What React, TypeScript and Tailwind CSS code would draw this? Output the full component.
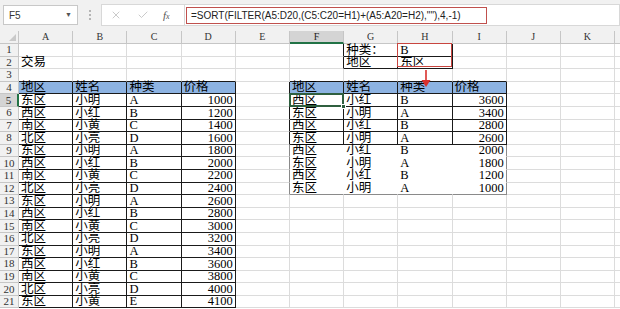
import { X, Check } from "lucide-react";

const COLS = ["A", "B", "C", "D", "E", "F", "G", "H", "I", "J", "K", ""];

type Cell = { v: string; num?: boolean };

const leftRows: [string, string, string, number][] = [
  ["东区", "小明", "A", 1000],
  ["西区", "小红", "B", 1200],
  ["南区", "小黄", "C", 1400],
  ["北区", "小亮", "D", 1600],
  ["东区", "小明", "A", 1800],
  ["西区", "小红", "B", 2000],
  ["南区", "小黄", "C", 2200],
  ["北区", "小亮", "D", 2400],
  ["东区", "小明", "A", 2600],
  ["西区", "小红", "B", 2800],
  ["南区", "小黄", "C", 3000],
  ["北区", "小亮", "D", 3200],
  ["东区", "小明", "A", 3400],
  ["西区", "小红", "B", 3600],
  ["南区", "小黄", "C", 3800],
  ["北区", "小亮", "D", 4000],
  ["东区", "小黄", "E", 4100],
];

const resultRows: [string, string, string, number][] = [
  ["西区", "小红", "B", 3600],
  ["东区", "小明", "A", 3400],
  ["西区", "小红", "B", 2800],
  ["东区", "小明", "A", 2600],
  ["西区", "小红", "B", 2000],
  ["东区", "小明", "A", 1800],
  ["西区", "小红", "B", 1200],
  ["东区", "小明", "A", 1000],
];

const cells: Record<string, Cell> = {};
const put = (c: number, r: number, v: string, num = false) => {
  cells[`${c}:${r}`] = { v, num };
};

put(1, 2, "交易");
["地区", "姓名", "种类", "价格"].forEach((h, i) => {
  put(1 + i, 4, h);
  put(6 + i, 4, h);
});
leftRows.forEach((row, i) => {
  put(1, 5 + i, row[0]);
  put(2, 5 + i, row[1]);
  put(3, 5 + i, row[2]);
  put(4, 5 + i, String(row[3]), true);
});
resultRows.forEach((row, i) => {
  put(6, 5 + i, row[0]);
  put(7, 5 + i, row[1]);
  put(8, 5 + i, row[2]);
  put(9, 5 + i, String(row[3]), true);
});
put(7, 1, "种类：");
put(8, 1, "B");
put(7, 2, "地区");
put(8, 2, "东区");

const inBlack = (c: number, r: number) =>
  (c >= 1 && c <= 4 && r >= 4 && r <= 21) ||
  (c >= 7 && c <= 8 && r >= 1 && r <= 2) ||
  (c >= 6 && c <= 9 && r >= 4 && r <= 8);

const inSpill = (c: number, r: number) => c >= 6 && c <= 9 && r >= 9 && r <= 12;

const isHeader = (c: number, r: number) =>
  r === 4 && ((c >= 1 && c <= 4) || (c >= 6 && c <= 9));

const rightCls = {
  black: "border-r-[#1a1a1a]",
  gray: "border-r-[#8a8a8a]",
  none: "border-r-transparent",
  grid: "border-r-[#dcdcdc]",
};
const bottomCls = {
  black: "border-b-[#1a1a1a]",
  gray: "border-b-[#8a8a8a]",
  none: "border-b-transparent",
  grid: "border-b-[#dcdcdc]",
};

function rightKind(c: number, r: number): keyof typeof rightCls {
  if (inBlack(c, r) || inBlack(c + 1, r)) return "black";
  if (inSpill(c, r)) return c === 9 ? "gray" : "none";
  if (inSpill(c + 1, r)) return "gray";
  return "grid";
}

function bottomKind(c: number, r: number): keyof typeof bottomCls {
  if (inBlack(c, r) || inBlack(c, r + 1)) return "black";
  if (inSpill(c, r)) return r === 12 ? "gray" : "none";
  return "grid";
}

function Toolbar() {
  return (
    <div className="flex h-[28px] items-start bg-[#f1f1f1] pt-[4px] pl-[3px] font-['Liberation_Sans',sans-serif]">
      <div className="mt-[1px] flex h-[20px] w-[75px] items-center justify-between border border-[#c8c8c8] bg-white pl-[5px] pr-[5px] text-[10px] text-[#333]">
        <span>F5</span>
        <span className="text-[7px] text-[#555]">▼</span>
      </div>
      <div className="flex h-[22px] w-[23px] flex-col items-center justify-center gap-[2px]">
        <span className="h-[2px] w-[2px] bg-[#b5b5b5]" />
        <span className="h-[2px] w-[2px] bg-[#b5b5b5]" />
        <span className="h-[2px] w-[2px] bg-[#b5b5b5]" />
      </div>
      <div className="flex h-[22px] w-[84px] items-center border border-[#d8d8d8] bg-white">
        <X size={12} strokeWidth={1.5} className="ml-[8px] text-[#b8b8b8]" />
        <Check size={12} strokeWidth={1.5} className="ml-[15px] text-[#b8b8b8]" />
        <span className="ml-[14px] font-['Liberation_Serif',serif] text-[11px] italic text-[#555]">
          f<span className="text-[8px]">x</span>
        </span>
      </div>
      <div className="flex h-[22px] flex-1 items-center border border-l-0 border-[#d8d8d8] bg-white pl-[1px]">
        <div className="flex h-[17px] w-[301px] items-center border-[1.5px] border-[#c0504d] pl-[4px] text-[10px] text-[#222]">
          =SORT(FILTER(A5:D20,(C5:C20=H1)+(A5:A20=H2),""),4,-1)
        </div>
      </div>
    </div>
  );
}

function ColumnHeader() {
  return (
    <div className="grid h-[16px] grid-cols-[19px_repeat(12,54.2px)] bg-[#f1f1f1] pt-[3px]">
      <div className="relative border-r border-b border-[#c6c6c6]">
        <div className="absolute right-[2px] bottom-[2px] h-0 w-0 border-l-[7px] border-t-[7px] border-l-transparent border-t-transparent border-r-0 border-b-[7px] border-b-[#c9c9c9]" />
      </div>
      {COLS.map((col, i) => (
        <div
          key={i}
          className={
            col === "F"
              ? "flex items-center justify-center border-r border-r-[#c6c6c6] border-b-2 border-b-[#217346] bg-[#d4d4d4] text-[10px] leading-none text-[#222]"
              : "flex items-center justify-center border-r border-b border-[#c6c6c6] text-[10px] leading-none text-[#333]"
          }
        >
          {col}
        </div>
      ))}
    </div>
  );
}

function SheetCell({ c, r }: { c: number; r: number }) {
  const cell = cells[`${c}:${r}`];
  const bg = isHeader(c, r) ? "bg-[#8db3e2]" : "bg-white";
  const align = cell?.num ? "justify-end pr-[2px]" : "justify-start pl-[2px]";
  const selected = c === 6 && r === 5;
  const redBox = c === 8 && r === 1;
  const arrow = c === 8 && r === 3;
  return (
    <div
      className={`relative flex items-center overflow-visible whitespace-nowrap border-r border-b ${rightCls[rightKind(c, r)]} ${bottomCls[bottomKind(c, r)]} ${bg} ${align} ${
        selected || redBox || arrow ? "z-10" : ""
      }`}
    >
      {cell && <span className="leading-none">{cell.v}</span>}
      {selected && (
        <>
          <div className="absolute -top-[1px] -left-[1px] h-[calc(100%+2px)] w-[calc(100%+2px)] border-2 border-[#2f5f3f]" />
          <div className="absolute -right-[3px] -bottom-[3px] h-[5px] w-[5px] border border-white bg-[#2f5f3f]" />
        </>
      )}
      {redBox && (
        <div className="absolute -top-[1px] -left-[1px] h-[calc(200%+1px)] w-[calc(100%+1px)] border-[1.5px] border-[#c8453f]" />
      )}
      {arrow && (
        <svg
          width="12"
          height="18"
          viewBox="0 0 12 18"
          className="absolute top-[1px] left-[22px]"
        >
          <line x1="6" y1="0" x2="6" y2="11" stroke="#d9302c" strokeWidth="1.6" />
          <polygon points="1.5,10 10.5,10 6,17" fill="#d9302c" />
        </svg>
      )}
    </div>
  );
}

function Sheet() {
  const rows = Array.from({ length: 21 }, (_, i) => i + 1);
  return (
    <div className="grid auto-rows-[12.6px] grid-cols-[19px_repeat(12,54.2px)] font-['Liberation_Serif','Noto_Sans_CJK_SC',serif] text-[12.5px] text-black">
      {rows.map((r) => (
        <div key={r} className="contents">
          <div
            className={
              r === 5
                ? "flex items-center justify-center border-r-2 border-r-[#217346] border-b border-b-[#c6c6c6] bg-[#d4d4d4] text-[11px] leading-none text-[#222]"
                : "flex items-center justify-center border-r border-b border-[#c6c6c6] bg-[#f1f1f1] text-[11px] leading-none text-[#333]"
            }
          >
            {r}
          </div>
          {COLS.map((_, i) => (
            <SheetCell key={i} c={i + 1} r={r} />
          ))}
        </div>
      ))}
    </div>
  );
}

export default function App() {
  return (
    <div className="h-[309px] w-[620px] overflow-hidden bg-white">
      <Toolbar />
      <div className="font-['Liberation_Serif',serif]">
        <ColumnHeader />
      </div>
      <Sheet />
    </div>
  );
}
